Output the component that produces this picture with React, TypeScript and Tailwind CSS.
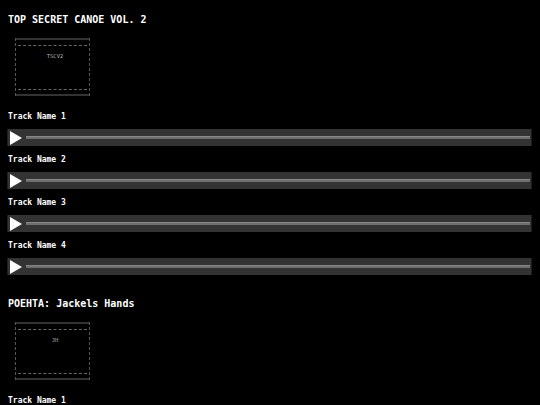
const albums = [
  {
    title: "TOP SECRET CANOE VOL. 2",
    short: "TSCV2",
    tracks: ["Track Name 1", "Track Name 2", "Track Name 3", "Track Name 4"],
  },
  {
    title: "POEHTA: Jackels Hands",
    short: "JH",
    tracks: ["Track Name 1", "Track Name 2"],
  },
];

// placeholder cover art, drawn as a dashed frame
function Cover({ label }: { label: string }) {
  return (
    <div className="ml-[15px] w-[75px] h-[58px] border-x border-dashed border-[#555] flex flex-col">
      <div className="h-[2px] bg-[#333]" />
      <div className="mt-[5px] mx-[2px] border-t border-dashed border-[#666]" />
      <div className="mt-[7px] text-center text-[5.5px] leading-[6px] text-[#b4b4b4] pl-[5px]">{label}</div>
      <div className="flex-1" />
      <div className="mb-[4px] mx-[2px] border-t border-dashed border-[#666]" />
      <div className="h-[2px] bg-[#333]" />
    </div>
  );
}

function Player() {
  return (
    <div className="ml-[7px] mr-[8px] h-[17px] bg-[#333] border-l border-r border-[#1e1e1e] flex items-center">
      <svg width="12" height="14" viewBox="0 0 12 14" className="ml-[2px] shrink-0">
        <path d="M0 0 L12 7 L0 14 Z" fill="#fff" />
      </svg>
      <div className="flex-1 ml-[4px] mr-[1px] h-[3px] bg-[#6e6e6e] border-t border-[#888]" />
    </div>
  );
}

export default function App() {
  return (
    <div className="min-h-[405px] bg-black text-white font-['DejaVu_Sans_Mono',monospace]">
      {albums.map((album) => (
        <section key={album.title} className="flex flex-col pt-[14px] pb-[9px]">
          <h2 className="px-[8px] text-[10px] leading-[12px] font-bold">{album.title}</h2>
          <div className="mt-[12px]">
            <Cover label={album.short} />
          </div>
          <div className="mt-[7px] flex flex-col">
            {album.tracks.map((t) => (
              <div key={t} className="flex flex-col">
                <div className="mt-[8px] mb-[6px] px-[8px] text-[8px] leading-[12px] font-bold">{t}</div>
                <Player />
              </div>
            ))}
          </div>
        </section>
      ))}
    </div>
  );
}
